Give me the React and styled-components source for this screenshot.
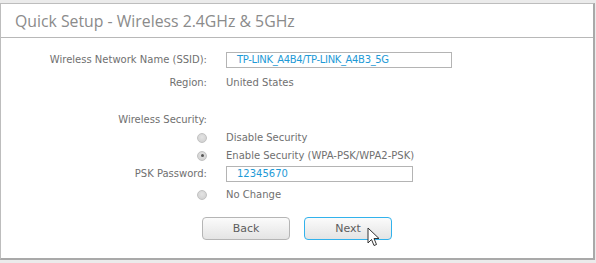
import React from "react";
import styled, { createGlobalStyle } from "styled-components";

const GlobalStyle = createGlobalStyle`
  html, body {
    margin: 0;
    padding: 0;
    background: #ebebeb;
  }
  body {
    width: 596px;
    height: 263px;
    overflow: hidden;
  }
`;

const Page = styled.div`
  padding-top: 3px;
  height: 260px;
`;

const Panel = styled.div`
  position: relative;
  box-sizing: border-box;
  width: 595px;
  height: 257px;
  background: #fff;
  border: 1px solid #bdbdbd;
  border-right: 2px solid #a9a9a9;
  border-bottom: 2px solid #a9a9a9;
  display: flex;
  flex-direction: column;
`;

const Header = styled.div`
  height: 33px;
  border-bottom: 1px solid #b8b8b8;
  display: flex;
  align-items: center;
  padding-left: 14px;
  font-family: "Open Sans", "Noto Sans", sans-serif;
  font-size: 15.8px;
  color: #8b8b8b;
`;

const Form = styled.div`
  display: grid;
  grid-template-columns: 206px 1fr;
  column-gap: 19px;
  align-items: center;
  padding-top: 13px;
  font-family: "DejaVu Sans", Verdana, sans-serif;
  font-size: 10px;
  color: #707070;
`;

const Label = styled.div`
  text-align: right;
  height: ${(p) => p.h || 18}px;
  line-height: ${(p) => p.h || 18}px;
  margin-top: ${(p) => p.mt || 0}px;
`;

const Value = styled.div`
  height: ${(p) => p.h || 18}px;
  line-height: ${(p) => p.h || 18}px;
  margin-top: ${(p) => p.mt || 0}px;
`;

const FieldCell = styled(Value)`
  display: flex;
  align-items: center;
`;

const TextBox = styled.div`
  box-sizing: border-box;
  width: ${(p) => p.w}px;
  height: 16px;
  border: 1px solid #b4b4b4;
  padding-left: 10px;
  line-height: 14px;
  color: #1e9ad6;
  letter-spacing: ${(p) => (p.tight ? "-0.35px" : "0")};
`;

const RadioCell = styled.div`
  display: flex;
  justify-content: flex-end;
  align-items: center;
  height: ${(p) => p.h || 18}px;
  margin-top: ${(p) => p.mt || 0}px;
`;

const Radio = styled.span`
  box-sizing: border-box;
  width: 10px;
  height: 10px;
  border-radius: 50%;
  border: 1px solid #c2c2c2;
  background: radial-gradient(circle at 50% 40%, #e4e4e4, #cdcdcd);
  display: flex;
  align-items: center;
  justify-content: center;
  &::after {
    content: "";
    display: ${(p) => (p.checked ? "block" : "none")};
    width: 3px;
    height: 3px;
    border-radius: 50%;
    background: #555;
  }
`;

const Buttons = styled.div`
  display: flex;
  gap: 14px;
  padding-left: 201px;
  margin-top: 11px;
`;

const Button = styled.button`
  box-sizing: border-box;
  width: 88px;
  height: 23px;
  border-radius: 4px;
  border: 1px solid ${(p) => (p.active ? "#32b2ec" : "#b5b5b5")};
  background: linear-gradient(#fbfbfb, #e4e4e4);
  font-family: "DejaVu Sans", Verdana, sans-serif;
  font-size: 11px;
  color: #5d5d5d;
  padding: 0;
`;

const Cursor = styled.svg`
  position: absolute;
  left: 366px;
  top: 223px;
`;

export default function App() {
  return (
    <>
      <GlobalStyle />
      <Page>
        <Panel>
          <Header>Quick Setup - Wireless 2.4GHz &amp; 5GHz</Header>
          <Form>
            <Label>Wireless Network Name (SSID):</Label>
            <FieldCell>
              <TextBox w={226} tight>
                TP-LINK_A4B4/TP-LINK_A4B3_5G
              </TextBox>
            </FieldCell>

            <Label mt={5}>Region:</Label>
            <Value mt={5}>United States</Value>

            <Label mt={19}>Wireless Security:</Label>
            <Value mt={19} />

            <RadioCell>
              <Radio />
            </RadioCell>
            <Value>Disable Security</Value>

            <RadioCell h={17}>
              <Radio checked />
            </RadioCell>
            <Value h={17}>Enable Security (WPA-PSK/WPA2-PSK)</Value>

            <Label h={20}>PSK Password:</Label>
            <FieldCell h={20}>
              <TextBox w={187}>12345670</TextBox>
            </FieldCell>

            <RadioCell h={22}>
              <Radio />
            </RadioCell>
            <Value h={22}>No Change</Value>
          </Form>
          <Buttons>
            <Button>Back</Button>
            <Button active>Next</Button>
          </Buttons>
          <Cursor width="14" height="22" viewBox="0 0 14 22">
            <path
              d="M1 1 L1 16 L4.5 12.5 L7 18.5 L9.5 17.5 L7 11.5 L12 11.5 Z"
              fill="#fff"
              stroke="#333"
              strokeWidth="1"
              strokeLinejoin="round"
            />
          </Cursor>
        </Panel>
      </Page>
    </>
  );
}
